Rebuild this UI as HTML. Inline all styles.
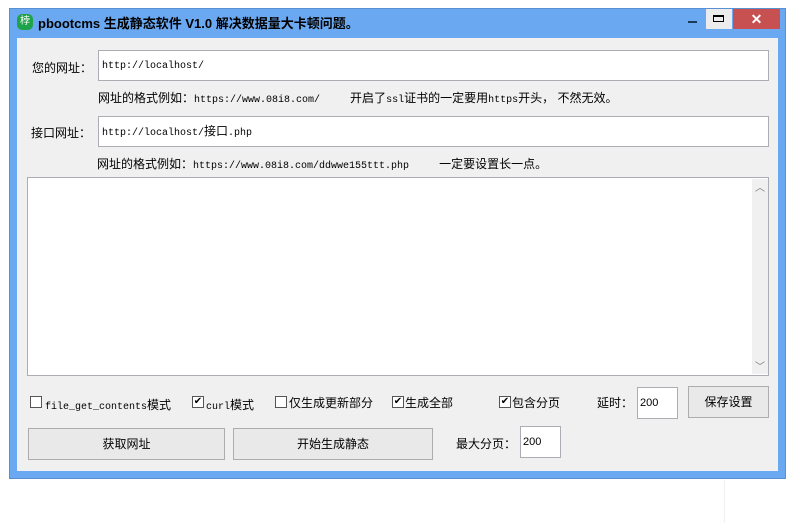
<!DOCTYPE html>
<html><head><meta charset="utf-8"><style>
body{margin:0;width:803px;height:523px;background:#fff;position:relative;overflow:hidden;font-family:"Liberation Sans","Noto Sans CJK SC",sans-serif;font-size:12px;color:#000}
.a{position:absolute}
.win{left:9px;top:8px;width:777px;height:471px;background:#6aa9f2;border:1px solid #5a8fd0;box-sizing:border-box}
.client{left:17px;top:38px;width:761px;height:433px;background:#f0f0f0}
.inp{position:absolute;background:#fff;border:1px solid #abadb3;box-sizing:border-box;font-family:"Liberation Mono","Noto Sans CJK SC",monospace;font-size:10px;padding-left:3px}
.lbl{position:absolute;font-size:12px;white-space:nowrap}
.mono{font-family:"Liberation Mono","Noto Sans CJK SC",monospace;font-size:10px}
.btn{position:absolute;background:#e9e9e9;border:1px solid #adadad;box-sizing:border-box;text-align:center;font-size:12px}
.cb{position:absolute;width:12px;height:12px;border:1px solid #555;background:#fff;box-sizing:border-box;font-size:10px;line-height:10px;text-align:center}
.gap{display:inline-block}
</style></head><body>
<div class="a win"></div>
<div class="a" style="left:17px;top:14px;width:16px;height:16px;border-radius:5px;background:#1fa34a;color:#fff;font-size:10px;text-align:center;line-height:16px">桲</div>
<div class="a" style="left:38px;top:13px;font-size:13px;font-weight:bold;color:#000">pbootcms 生成静态软件 V1.0 解决数据量大卡顿问题。</div>
<div class="a" style="left:688px;top:21px;width:9px;height:2px;background:#1a3a5a"></div>
<div class="a" style="left:706px;top:9px;width:26px;height:20px;background:#ececec"></div>
<div class="a" style="left:713px;top:15px;width:11px;height:7px;border:1px solid #000;border-top-width:2px;box-sizing:border-box"></div>
<div class="a" style="left:733px;top:9px;width:47px;height:20px;background:#c75050;color:#fff;text-align:center;font-size:14px;line-height:20px;font-weight:bold">✕</div>
<div class="a client"></div>
<div class="lbl" style="left:32px;top:59px">您的网址：</div>
<div class="inp" style="left:98px;top:50px;width:671px;height:31px;line-height:31px">http://localhost/</div>
<div class="lbl" style="left:98px;top:89px">网址的格式例如：<span class="mono">https://www.08i8.com/</span><span class="gap" style="width:30px"></span>开启了<span class="mono">ssl</span>证书的一定要用<span class="mono">https</span>开头， 不然无效。</div>
<div class="lbl" style="left:31px;top:124px">接口网址：</div>
<div class="inp" style="left:98px;top:116px;width:671px;height:31px;line-height:31px">http://localhost/<span style="font-size:12px">接口</span>.php</div>
<div class="lbl" style="left:97px;top:155px">网址的格式例如：<span class="mono">https://www.08i8.com/ddwwe155ttt.php</span><span class="gap" style="width:30px"></span>一定要设置长一点。</div>
<div class="inp" style="left:27px;top:177px;width:742px;height:199px"></div>
<div class="a" style="left:752px;top:179px;width:16px;height:195px;background:#f0f0f0"></div>
<div class="a" style="left:755px;top:179px;color:#777;font-size:10px">︿</div>
<div class="a" style="left:755px;top:358px;color:#777;font-size:10px">﹀</div>
<div class="cb" style="left:30px;top:396px"></div><div class="lbl mono" style="left:45px;top:396px">file_get_contents<span style="font-family:'Noto Sans CJK SC';font-size:12px">模式</span></div>
<div class="cb" style="left:192px;top:396px">✔</div><div class="lbl mono" style="left:206px;top:396px">curl<span style="font-family:'Noto Sans CJK SC';font-size:12px">模式</span></div>
<div class="cb" style="left:275px;top:396px"></div><div class="lbl" style="left:289px;top:394px">仅生成更新部分</div>
<div class="cb" style="left:392px;top:396px">✔</div><div class="lbl" style="left:405px;top:394px">生成全部</div>
<div class="cb" style="left:499px;top:396px">✔</div><div class="lbl" style="left:512px;top:394px">包含分页</div>
<div class="lbl" style="left:597px;top:394px">延时：</div>
<div class="inp" style="left:637px;top:387px;width:41px;height:32px;line-height:30px;padding-left:2px;font-family:'Liberation Sans';font-size:11px">200</div>
<div class="btn" style="left:688px;top:386px;width:81px;height:32px;line-height:30px">保存设置</div>
<div class="btn" style="left:28px;top:428px;width:197px;height:32px;line-height:30px">获取网址</div>
<div class="btn" style="left:233px;top:428px;width:200px;height:32px;line-height:30px">开始生成静态</div>
<div class="lbl" style="left:456px;top:435px">最大分页：</div>
<div class="inp" style="left:520px;top:426px;width:41px;height:32px;line-height:30px;padding-left:2px;font-family:'Liberation Sans';font-size:11px">200</div>
<div class="a" style="left:724px;top:480px;width:1px;height:43px;background:#f0f0f0"></div>
</body></html>
